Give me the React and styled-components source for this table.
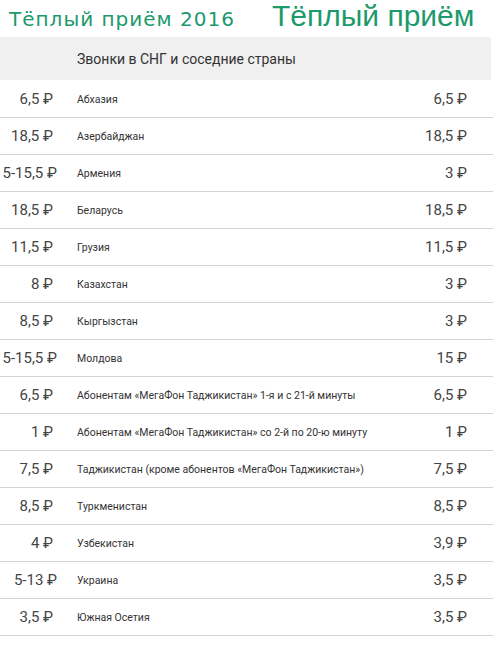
import React from 'react'
import styled, { createGlobalStyle } from 'styled-components'

const GlobalStyle = createGlobalStyle`
  body {
    margin: 0;
    background: #fff;
    font-family: Roboto, "Liberation Sans", sans-serif;
  }
`

const Page = styled.div`
  width: 493px;
  overflow: hidden;
`

const TitleBar = styled.div`
  display: flex;
  align-items: baseline;
  height: 37px;
  padding-left: 9px;
  color: #1c9a6c;
`

const SmallTitle = styled.h2`
  margin: 0;
  font-family: "DejaVu Sans", Verdana, sans-serif;
  font-weight: normal;
  font-size: 20px;
  letter-spacing: 1px;
  line-height: 32px;
  width: 263px;
`

const BigTitle = styled.h1`
  margin: 0;
  font-family: "Liberation Sans", Arial, sans-serif;
  font-weight: normal;
  font-size: 30px;
  line-height: 32px;
`

const HeaderBand = styled.div`
  height: 43px;
  margin-right: 2px;
  background: #f0f0f0;
  display: flex;
  align-items: center;
  padding-left: 77px;
  margin-bottom: 1px;
  font-size: 14px;
  color: #333;
`

const Row = styled.div`
  display: grid;
  grid-template-columns: 53px 1fr auto;
  column-gap: 24px;
  align-items: center;
  height: 36px;
  padding-right: 26px;
  border-bottom: 1px solid #d4d4d4;
`

const Price = styled.div`
  font-size: 15px;
  color: #444;
  text-align: right;
  white-space: nowrap;
  margin-right: ${(p) => (p.$range ? '-4px' : '0')};
`

const Name = styled.div`
  font-size: 10.5px;
  color: #333;
`

const rows = [
  ['6,5', 'Абхазия', '6,5'],
  ['18,5', 'Азербайджан', '18,5'],
  ['5-15,5', 'Армения', '3'],
  ['18,5', 'Беларусь', '18,5'],
  ['11,5', 'Грузия', '11,5'],
  ['8', 'Казахстан', '3'],
  ['8,5', 'Кыргызстан', '3'],
  ['5-15,5', 'Молдова', '15'],
  ['6,5', 'Абонентам «МегаФон Таджикистан» 1-я и с 21-й минуты', '6,5'],
  ['1', 'Абонентам «МегаФон Таджикистан» со 2-й по 20-ю минуту', '1'],
  ['7,5', 'Таджикистан (кроме абонентов «МегаФон Таджикистан»)', '7,5'],
  ['8,5', 'Туркменистан', '8,5'],
  ['4', 'Узбекистан', '3,9'],
  ['5-13', 'Украина', '3,5'],
  ['3,5', 'Южная Осетия', '3,5'],
]

const App = () => {
  return (
    <Page>
      <GlobalStyle />
      <TitleBar>
        <SmallTitle>Тёплый приём 2016</SmallTitle>
        <BigTitle>Тёплый приём</BigTitle>
      </TitleBar>
      <HeaderBand>Звонки в СНГ и соседние страны</HeaderBand>
      {rows.map(([before, name, after]) => (
        <Row key={name}>
          <Price $range={before.includes('-')}>{before} ₽</Price>
          <Name>{name}</Name>
          <Price>{after} ₽</Price>
        </Row>
      ))}
    </Page>
  )
}

export default App
